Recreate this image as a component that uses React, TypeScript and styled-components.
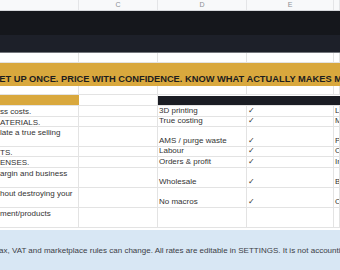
import styled, { createGlobalStyle } from "styled-components"

const COLS = "79px 79px 89px 87px 1fr"
const LINE = "#e3e3e3"

const GlobalStyle = createGlobalStyle`
	body {
		margin: 0;
		background: #FFFFFF;
		font-family: "Liberation Sans", Arial, sans-serif;
		overflow: hidden;
	}
`

interface Row {
	left: string,
	item: string,
	check: boolean,
	extra: string,
	height: number,
}

const rows: Row[] = [
	{ left: "ss costs.", item: "3D printing", check: true, extra: "Layers", height: 11 },
	{ left: "ATERIALS.", item: "True costing", check: true, extra: "Materials", height: 10 },
	{ left: "late a true selling", item: "AMS / purge waste", check: true, extra: "Printers", height: 20 },
	{ left: "TS.", item: "Labour", check: true, extra: "Overheads", height: 10 },
	{ left: "ENSES.", item: "Orders & profit", check: true, extra: "Inventory", height: 11 },
	{ left: "argin and business", item: "Wholesale", check: true, extra: "Batches", height: 20 },
	{ left: "hout destroying your", item: "No macros", check: true, extra: "Orders", height: 20 },
	{ left: "ment/products", item: "", check: false, extra: "", height: 20 },
]

export default function App() {
	return (
		<Sheet>
			<GlobalStyle />
			<ColHeader>
				<ColLetter></ColLetter>
				<ColLetter>C</ColLetter>
				<ColLetter>D</ColLetter>
				<ColLetter>E</ColLetter>
				<ColLetter></ColLetter>
			</ColHeader>
			<DarkBand>
				<DarkTop />
				<DarkBottom />
			</DarkBand>
			<GridRow $height={10}>
				<Cell /><Cell /><Cell /><Cell /><Cell />
			</GridRow>
			<Banner>SET UP ONCE. PRICE WITH CONFIDENCE. KNOW WHAT ACTUALLY MAKES MONEY.</Banner>
			<GridRow $height={9}>
				<Cell /><Cell /><Cell /><Cell /><Cell />
			</GridRow>
			<GridRow $height={11}>
				<GoldCell />
				<Cell />
				<DarkCell />
				<DarkCell />
				<DarkCell />
			</GridRow>
			{rows.map((r, i) => (
				<GridRow key={i} $height={r.height}>
					<LeftCell>{r.left}</LeftCell>
					<Cell />
					<Cell>{r.item}</Cell>
					<Cell>{r.check ? "✓" : ""}</Cell>
					<Cell>{r.extra}</Cell>
				</GridRow>
			))}
			<Notice>
				<NoticeText>Tax, VAT and marketplace rules can change. All rates are editable in SETTINGS. It is not accounting advice.</NoticeText>
			</Notice>
		</Sheet>
	)
}

const Sheet = styled.div`
	width: 340px;
	height: 270px;
	overflow: hidden;
	display: flex;
	flex-direction: column;
`
const ColHeader = styled.div`
	display: grid;
	grid-template-columns: ${COLS};
	height: 11px;
	box-sizing: border-box;
	background: #f8f9fa;
	border-bottom: 1px solid #d6d8db;
	flex-shrink: 0;
`
const ColLetter = styled.div`
	border-right: 1px solid #e4e5e7;
	font-size: 7px;
	line-height: 10px;
	color: #8c8f94;
	text-align: center;
`
const DarkBand = styled.div`
	display: flex;
	flex-direction: column;
	border-bottom: 1px solid #74777d;
	flex-shrink: 0;
`
const DarkTop = styled.div`
	height: 24px;
	background: #15171c;
`
const DarkBottom = styled.div`
	height: 17px;
	background: #1d2029;
`
const GridRow = styled.div<{ $height: number }>`
	display: grid;
	grid-template-columns: ${COLS};
	height: ${p => p.$height}px;
	box-sizing: border-box;
	border-bottom: 1px solid ${LINE};
	flex-shrink: 0;
`
const Cell = styled.div`
	border-right: 1px solid ${LINE};
	padding: 0 0 0 1px;
	font-size: 8px;
	line-height: 10px;
	color: #333333;
	white-space: nowrap;
	overflow: hidden;
	display: flex;
	align-items: flex-end;
`
const LeftCell = styled(Cell)`
	padding: 0;
	align-items: flex-start;
	padding-top: 1px;
`
const GoldCell = styled.div`
	background: #d9a83d;
	border-right: 1px solid #d9a83d;
`
const DarkCell = styled.div`
	background: #1b1d24;
	margin-top: 1px;
`
const Banner = styled.div`
	height: 23px;
	box-sizing: border-box;
	padding-top: 11px;
	margin-left: -7px;
	background: #d9a83d;
	font-weight: 700;
	font-size: 9.3px;
	line-height: 11px;
	color: #1d1d1d;
	white-space: nowrap;
	flex-shrink: 0;
	overflow: hidden;
`
const Notice = styled.div`
	margin-top: 2px;
	height: 40px;
	background: #d8e7f4;
	display: flex;
	align-items: center;
	flex-shrink: 0;
	overflow: hidden;
`
const NoticeText = styled.div`
	margin-left: -5px;
	padding-top: 1px;
	font-size: 8px;
	line-height: 10px;
	color: #3c4046;
	white-space: nowrap;
`
